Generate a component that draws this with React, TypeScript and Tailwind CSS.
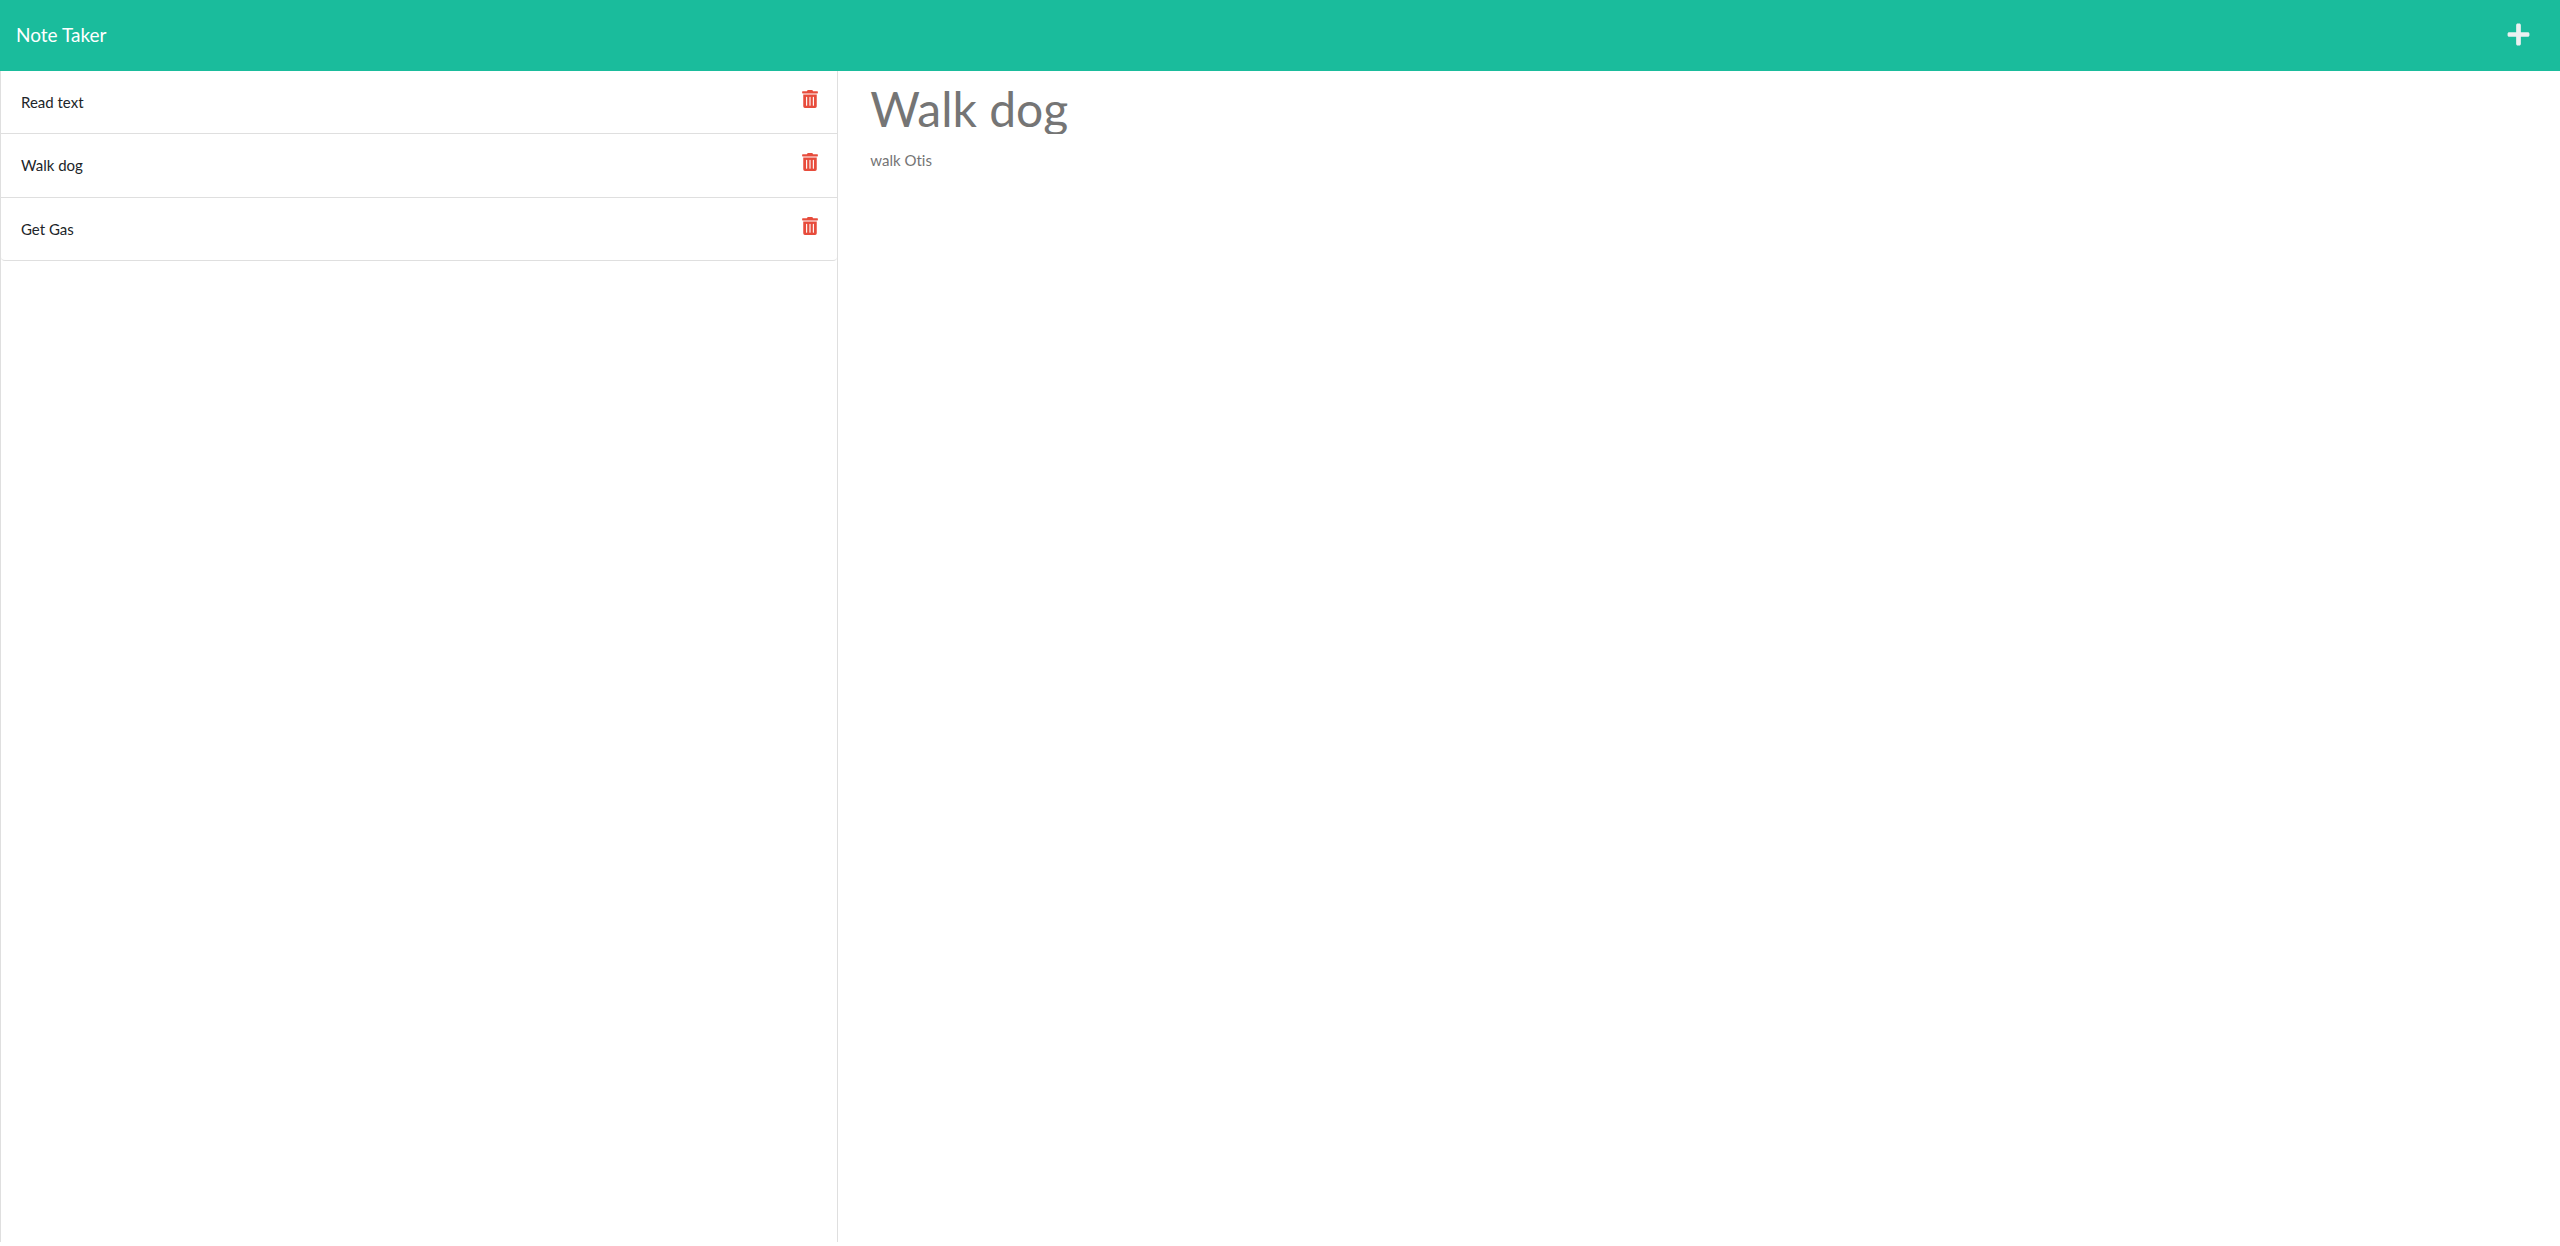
import { useState } from "react";
import { FaPlus, FaTrashAlt } from "react-icons/fa";

const notes = [
  { title: "Read text", text: "" },
  { title: "Walk dog", text: "walk Otis" },
  { title: "Get Gas", text: "" },
];

export default function App() {
  const [selected, setSelected] = useState(1);
  const note = notes[selected];
  return (
    <div className="flex min-h-screen flex-col bg-white pb-1 font-['Lato',sans-serif] text-[#212529] [font-variant-ligatures:none]">
      <nav className="flex items-center justify-between bg-[#1abc9c] px-4 pt-[19px] pb-[21px] text-white">
        <a href="#" className="text-[19px] leading-[31px]">Note Taker</a>
        <button type="button" aria-label="New note" className="mr-[13px] text-[#ecf0f1]">
          <FaPlus className="size-[25px]" aria-hidden="true" />
        </button>
      </nav>
      <main className="grid flex-1 grid-cols-[minmax(0,1fr)_minmax(0,2fr)]">
        <aside className="mr-[15px] border-x border-[#dfdfdf]">
          <ul>
            {notes.map((n, i) => (
              <li
                key={n.title}
                className="flex items-start justify-between border-b border-[#dfdfdf] pt-[19px] pr-[19px] pb-5 pl-5 text-[15px] leading-6 first:pb-[19px] last:rounded-b last:pb-[19px]"
              >
                <button type="button" onClick={() => setSelected(i)}>{n.title}</button>
                <button type="button" aria-label={"Delete " + n.title} className="text-[#e74c3c]">
                  <FaTrashAlt className="h-[18px] w-4" aria-hidden="true" />
                </button>
              </li>
            ))}
          </ul>
        </aside>
        <section className="flex min-w-0 flex-col gap-3.5 px-[17px] pt-3">
          <input
            aria-label="Title"
            readOnly
            value={note.title}
            className="h-[51px] text-5xl leading-none text-[#757575] outline-none"
          />
          <textarea
            aria-label="Text"
            readOnly
            value={note.text}
            className="flex-1 resize-none text-[15px] leading-6 text-[#757575] outline-none"
          />
        </section>
      </main>
    </div>
  );
}
